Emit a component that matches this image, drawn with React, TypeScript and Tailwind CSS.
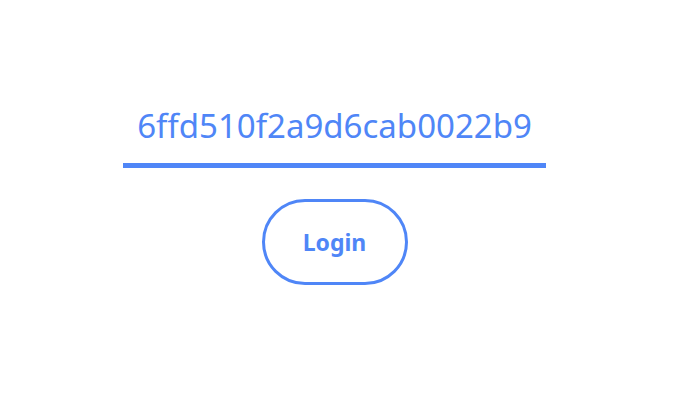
import React from 'react';

export default function App() {
  return (
    <div className="w-[681px] h-[411px] bg-white flex flex-col items-center pt-[97px] pr-[12px] font-['Noto_Sans','Open_Sans',sans-serif]">
      <input
        readOnly
        value="6ffd510f2a9d6cab0022b9"
        className="w-[423px] h-[71px] pb-[10px] text-center text-[33px] text-[#4f86f7] border-b-[5px] border-[#4f86f7] outline-none bg-transparent font-['Noto_Sans','Open_Sans',sans-serif]"
      />
      <button className="mt-[31px] w-[146px] h-[86px] rounded-full border-[3px] border-[#4f86f7] text-[#4f86f7] text-[23px] font-bold">
        Login
      </button>
    </div>
  );
}
